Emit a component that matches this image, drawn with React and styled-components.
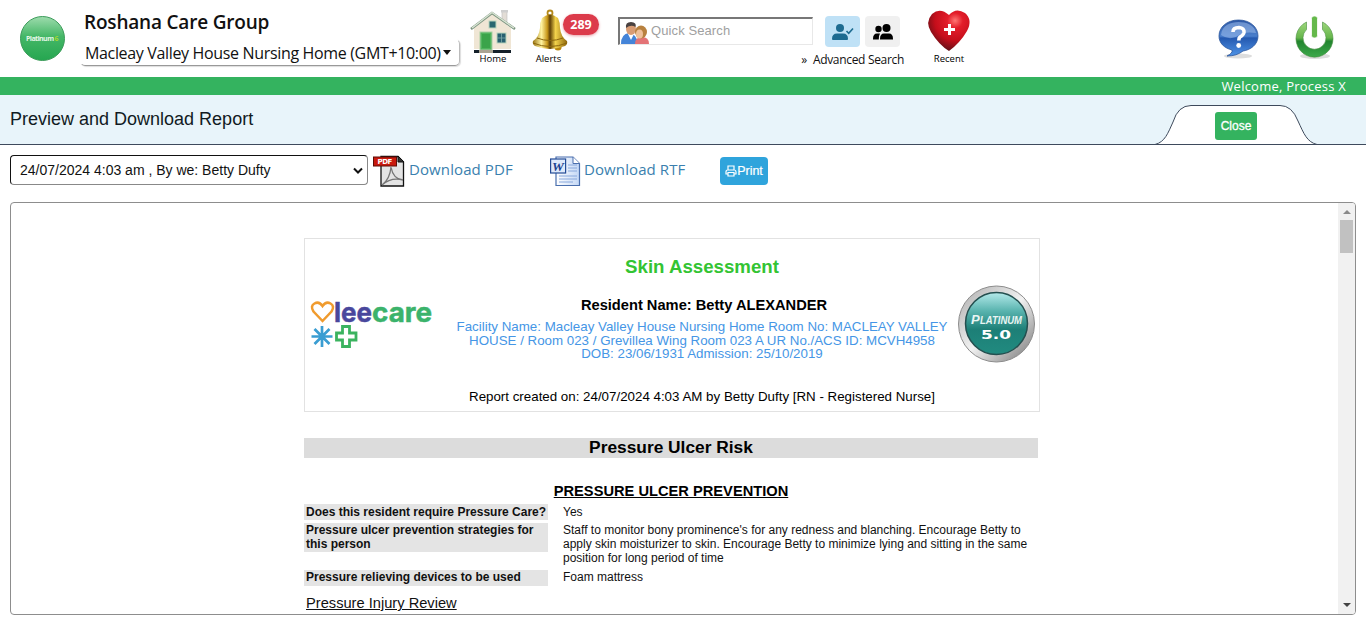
import React from "react";
import styled, { createGlobalStyle } from "styled-components";

const Global = createGlobalStyle`
  * { box-sizing: border-box; }
  body { margin: 0; background: #fff; overflow: hidden; font-family: "Liberation Sans", Arial, sans-serif; color: #111; }
`;

const ui = `"Open Sans", "Noto Sans", sans-serif`;

const Page = styled.div`
  height: 633px;
  display: flex;
  flex-direction: column;
`;

const Header = styled.header`
  height: 77px;
  display: flex;
  align-items: flex-start;
  padding-left: 20px;
  font-family: ${ui};
`;

const Slot = styled.div`
  flex: none;
  width: ${(p) => p.$w}px;
  margin-left: ${(p) => p.$gap || 0}px;
  padding-top: ${(p) => p.$top || 0}px;
  position: relative;
`;

const Pic = styled.svg`
  display: block;
  flex: none;
  overflow: visible;
`;

const OrgName = styled.div`
  padding-left: 4px;
  font-size: 19px;
  line-height: 26px;
  font-weight: 600;
  letter-spacing: -0.2px;
  white-space: nowrap;
`;

const SitePicker = styled.div`
  display: flex;
  align-items: center;
  height: 27px;
  margin-top: 4px;
  padding: 0 8px 0 4px;
  border: 1px solid transparent;
  border-right-color: #bbb;
  border-bottom-color: #999;
  border-radius: 5px;
  box-shadow: 1px 1px 1px #ddd;
  font-size: 16px;
  letter-spacing: -0.34px;
  white-space: nowrap;
`;

const Caret = styled.span`
  margin-left: 2px;
  border: 4px solid transparent;
  border-top: 5px solid #111;
  border-bottom: 0;
`;

const IconLabel = styled.div`
  margin-left: ${(p) => p.$shift || 0}px;
  padding-top: ${(p) => p.$drop || 0}px;
  font-size: 9.5px;
  line-height: 12px;
  text-align: center;
  color: #000;
`;

const Badge = styled.span`
  position: absolute;
  left: 31px;
  top: 14px;
  width: 36px;
  height: 21px;
  border-radius: 11px;
  background: #dc3b4b;
  color: #fff;
  font-size: 12.5px;
  font-weight: 700;
  line-height: 21px;
  text-align: center;
  box-shadow: 0 1px 3px #e9a0a8;
`;

const SearchRow = styled.div`
  display: flex;
  align-items: flex-start;
`;

const SearchBox = styled.div`
  display: flex;
  align-items: center;
  gap: 1px;
  width: 195px;
  height: 28px;
  margin: 1px 12px 0 0;
  padding: 0 0 0 1px;
  border: 1px solid #e8e8e8;
  border-top: 2px solid #777;
  border-left: 2px solid #777;
  font: 13px "Liberation Sans", Arial, sans-serif;
  letter-spacing: 0.1px;
  color: #a0a0a0;
`;

const SearchHint = styled.span`
  margin-top: -2px;
`;

const ModeButton = styled.div`
  display: flex;
  align-items: center;
  justify-content: center;
  width: 35px;
  height: 31px;
  margin-right: 5px;
  border-radius: 4px;
  background: ${(p) => (p.$active ? "#bfe1f6" : "#f0f0f0")};
`;

const Advanced = styled.div`
  width: 286px;
  margin-top: 5px;
  display: flex;
  justify-content: flex-end;
  gap: 6px;
  font-size: 12px;
  line-height: 16px;
  white-space: nowrap;
  letter-spacing: -0.32px;
`;

const Welcome = styled.div`
  height: 18px;
  background: #34b35f;
  color: #fff;
  padding-right: 20px;
  text-align: right;
  font: 13px/18px ${ui};
  letter-spacing: 0.23px;
`;

const TitleBar = styled.div`
  height: 50px;
  display: flex;
  justify-content: space-between;
  padding: 0 49px 0 10px;
  background: #e8f4fa;
  border-bottom: 1px solid #3e4a5c;
`;

const Title = styled.h1`
  margin: 0;
  font-size: 18px;
  line-height: 48px;
  font-weight: 400;
  color: #111a22;
`;

const CloseTab = styled.div`
  position: relative;
  width: 162px;
  height: 40px;
  margin-top: 10px;
`;

const CloseButton = styled.button`
  position: absolute;
  left: 60px;
  top: 7px;
  width: 42px;
  height: 28px;
  padding: 0;
  border: 0;
  border-radius: 3px;
  background: #34b35f;
  color: #fff;
  font: 12px "Liberation Sans", Arial, sans-serif;
  -webkit-text-stroke: 0.3px #fff;
`;

const Tools = styled.div`
  height: 57px;
  display: flex;
  align-items: flex-start;
  padding: 10px 10px 0;
`;

const VersionSelect = styled.div`
  width: 358px;
  height: 30px;
  display: flex;
  align-items: center;
  justify-content: space-between;
  padding: 0 4px 0 9px;
  border: 1px solid #111;
  border-right-color: #888;
  border-bottom-color: #888;
  border-radius: 4px;
  font-size: 14px;
`;

const DownloadLink = styled.a`
  display: flex;
  align-items: center;
  gap: ${(p) => p.$gap}px;
  width: ${(p) => p.$w}px;
  height: 32px;
  margin-left: ${(p) => p.$ml}px;
  color: #3a7fae;
  font: 15px/20px ${ui};
  letter-spacing: 0.1px;
  white-space: nowrap;
`;

const LinkText = styled.span`
  margin-top: -4px;
`;

const PrintButton = styled.button`
  display: flex;
  align-items: center;
  justify-content: center;
  width: 48px;
  height: 28px;
  margin: 2px 0 0 auto;
  padding: 0;
  border: 0;
  border-radius: 4px;
  background: #2fa4dc;
  color: #fff;
  font: 12.5px "Liberation Sans", Arial, sans-serif;
  -webkit-text-stroke: 0.2px #fff;
`;

const ToolGroup = styled.div`
  display: flex;
  width: 758px;
`;

const Viewer = styled.main`
  display: flex;
  height: 413px;
  margin: 0 10px;
  border: 1px solid #8d8d8d;
  border-radius: 4px;
  overflow: hidden;
`;

const Scroller = styled.div`
  width: 17px;
  display: flex;
  flex-direction: column;
  justify-content: space-between;
  align-items: center;
  padding: 7px 0 7px;
  background: #f1f1f1;
`;

const Thumb = styled.div`
  width: 13px;
  height: 33px;
  margin: 6px 0 auto;
  background: #c1c1c1;
`;

const Arrow = styled.div`
  border: 4px solid transparent;
  ${(p) => (p.$up ? "border-bottom: 4px solid #8a8a8a; border-top: 0;" : "border-top: 4px solid #444; border-bottom: 0;")}
`;

const Report = styled.article`
  flex: 1;
  padding: 35px 0 0 293px;
`;

const ReportHead = styled.section`
  display: flex;
  width: 736px;
  height: 174px;
  border: 1px solid #e2e2e2;
`;

const HeadText = styled.div`
  width: 496px;
  margin-left: 20px;
  text-align: center;
  white-space: nowrap;
`;

const ReportTitle = styled.h2`
  margin: 17px 0 0;
  font-size: 18.67px;
  line-height: 22px;
  color: #33c433;
`;

const Resident = styled.div`
  margin: 17px 0 0 4px;
  font-size: 14.67px;
  font-weight: 700;
  line-height: 20px;
  color: #000;
`;

const Facility = styled.div`
  margin-top: 5px;
  font-size: 13.33px;
  line-height: 13.5px;
  color: #4596e6;
`;

const Created = styled.div`
  margin-top: 27px;
  font-size: 13.33px;
  line-height: 18px;
  color: #000;
`;

const SectionBar = styled.h3`
  width: 734px;
  height: 20px;
  margin: 26px 0 0;
  background: #dcdcdc;
  text-align: center;
  font-size: 17.33px;
  line-height: 19px;
  color: #000;
`;

const SubHead = styled.h4`
  width: 734px;
  margin: 24px 0 4px;
  text-align: center;
  text-decoration: underline;
  font-size: 14.67px;
  line-height: 18px;
  color: #000;
`;

const Row = styled.div`
  display: grid;
  grid-template-columns: 244px 490px;
  align-items: start;
  margin-bottom: 3px;
  font-size: 12px;
  line-height: 14px;
`;

const Key = styled.div`
  padding: ${(p) => p.$lead}px 2px ${(p) => (p.$tall ? 1 : 2 - p.$lead)}px;
  background: #e4e4e4;
  font-weight: 700;
  white-space: nowrap;
`;

const Value = styled.div`
  padding: ${(p) => p.$lead}px 0 ${(p) => 2 - p.$lead}px 15px;
  white-space: nowrap;
`;

const Review = styled.div`
  padding: 5px 2px;
  font-size: 14.67px;
  line-height: 18px;
  text-decoration: underline;
`;

const BrandBall = () => (
  <Pic width="45" height="45" viewBox="0 0 45 45">
    <defs>
      <linearGradient id="ball" x1="0" y1="0" x2="0" y2="1">
        <stop offset="0" stopColor="#9fdcae" /><stop offset=".45" stopColor="#45b767" /><stop offset="1" stopColor="#25a650" />
      </linearGradient>
    </defs>
    <circle cx="22.5" cy="22.5" r="22" fill="url(#ball)" stroke="#3c9c5a" />
    <text x="6" y="25" fontFamily="Open Sans, sans-serif" fontSize="7" fontWeight="700" fill="#e6f7e6" textLength="28">Platinum</text>
    <text x="34.5" y="25" fontFamily="Open Sans, sans-serif" fontSize="7" fontWeight="700" fill="#a5d92f">6</text>
  </Pic>
);

const House = () => (
  <Pic width="46" height="44" viewBox="0 0 46 44">
    <rect x="32" y="2" width="5" height="14" fill="#e3ddd6" stroke="#bbb" strokeWidth=".6" />
    <rect x="31" y="1" width="7" height="2.5" fill="#cfcfcf" />
    <path d="M4 19 22 5 41 19V40H4Z" fill="#f0e6d5" />
    <path d="M4 41h37v3H4z" fill="#15202a" />
    <path d="M1 20 22 4 45 20" fill="none" stroke="#7d9480" strokeWidth="2.600" />
    <path d="M2 19 22 3.5 44 19" fill="none" stroke="#d9e5d3" strokeWidth="1.4" />
    <rect x="19" y="12" width="7" height="7" fill="#2a6770" stroke="#b9d5bd" />
    <rect x="10" y="23" width="12" height="18" fill="#4fb45c" stroke="#a9cfa4" />
    <path d="M12 25h8v14h-8z" fill="#3ba44a" />
    <rect x="27" y="24" width="9" height="10" fill="#286070" stroke="#b9d5bd" />
    <path d="M31.5 24v10M27 29h9" stroke="#7fa9a8" strokeWidth=".8" />
    <path d="M9 41h14v3H9z" fill="#aaa493" />
  </Pic>
);

const Bell = () => (
  <Pic width="36" height="42" viewBox="0 0 36 42">
    <defs>
      <linearGradient id="gold">
        <stop offset="0" stopColor="#9b7512" /><stop offset=".25" stopColor="#fff3a0" /><stop offset=".42" stopColor="#c9981a" />
        <stop offset=".5" stopColor="#5e3f06" /><stop offset=".66" stopColor="#f3d34c" /><stop offset="1" stopColor="#8d650b" />
      </linearGradient>
    </defs>
    <circle cx="18" cy="3" r="2.5" fill="none" stroke="#b58a1b" strokeWidth="1.8" />
    <circle cx="26" cy="37" r="3.600" fill="#b8860f" />
    <path d="M10 8Q18 1 26 8Q28 12 28 18Q29 27 35 31Q36 34 33 36Q18 42 3 36Q0 34 1 31Q7 27 8 18Q8 12 10 8Z" fill="url(#gold)" />
    <path d="M5 28Q18 33 31 28M1 33Q18 40 35 33" fill="none" stroke="#8b660d" strokeWidth="1" />
  </Pic>
);

const Couple = () => (
  <Pic width="29" height="24" viewBox="0 0 29 24">
    <path d="M0 24Q0 14 8 13Q16 14 17 24Z" fill="#4484d8" />
    <path d="M7 14l3 6 3-6Z" fill="#fff" />
    <ellipse cx="10" cy="9" rx="5" ry="6" fill="#d99c74" />
    <path d="M5 8Q4 2 10 2Q16 2.500 14.500 7Q10 4 5 8Z" fill="#4a4241" />
    <path d="M14 24Q14 17 21 17Q28 17 28 24Z" fill="#e37376" />
    <ellipse cx="20" cy="12" rx="6" ry="6.500" fill="#b8813f" />
    <ellipse cx="18.500" cy="14" rx="3.500" ry="4.500" fill="#efc09a" />
  </Pic>
);

const UserCheck = () => (
  <Pic width="23" height="18" viewBox="0 0 23 18" fill="#1d6b91">
    <circle cx="9" cy="5" r="4" />
    <path d="M1 16Q1 10.500 6 10.500H12Q17 10.500 17 16Q17 17 16 17H2Q1 17 1 16Z" />
    <path d="M15.500 8 17.700 10.300 22 5.500" fill="none" stroke="#1d6b91" strokeWidth="1.6" />
  </Pic>
);

const Users = () => (
  <Pic width="22" height="18" viewBox="0 0 22 18" fill="#000">
    <circle cx="6.500" cy="6" r="3.200" /><circle cx="14.500" cy="5" r="4" />
    <path d="M1 16Q1 10.500 5 10.500H8Q6.500 13 6.800 16.500H1Z" />
    <path d="M8 16Q8 10.500 12 10.500H17Q21 10.500 21 16V16.500H8Z" />
  </Pic>
);

const Heart = () => (
  <Pic width="42" height="42" viewBox="0 0 42 42">
    <defs>
      <radialGradient id="heart" cx=".65" cy=".25" r=".75">
        <stop offset="0" stopColor="#ff7774" /><stop offset=".25" stopColor="#e31d2a" /><stop offset=".65" stopColor="#c50e1b" /><stop offset="1" stopColor="#651017" />
      </radialGradient>
    </defs>
    <path d="M21 5Q12-3 4 4Q-3 12 3 22Q11 35 21 41Q32 33 39 21Q45 10 37 3Q28-3 21 5Z" fill="url(#heart)" />
    <path d="M20 14h3v4h4v3h-4v4h-3v-4h-4v-3h4Z" fill="#fff" />
  </Pic>
);

const Help = () => (
  <Pic width="41" height="40" viewBox="0 0 41 40">
    <defs>
      <linearGradient id="help" x1="0" y1="0" x2="0" y2="1">
        <stop offset="0" stopColor="#2d58a5" /><stop offset=".45" stopColor="#4a7fcc" /><stop offset=".5" stopColor="#2459b0" /><stop offset="1" stopColor="#4e93e6" />
      </linearGradient>
    </defs>
    <ellipse cx="20" cy="37" rx="14" ry="2.500" fill="#ddd" />
    <path d="M20.500 1C32 1 40 8 40 17C40 26 32 31 25 32Q19 37 9 37Q15 34 14 31C6 29 1 24 1 17C1 8 9 1 20.500 1Z" fill="url(#help)" stroke="#2b559c" strokeWidth=".8" />
    <path d="M3 16C4 6 13 3 20.500 3S37 6 38 14Q25 12 18 18Q10 21 3 16Z" fill="#a5c4ef" opacity=".5" />
    <path d="M15 13Q15 8.500 21 8.500Q26.500 9 26 13.500Q25.500 16 22 18Q20.800 19 20.800 21.500" fill="none" stroke="#fff" strokeWidth="3.600" />
    <circle cx="20.700" cy="26.500" r="2.400" fill="#fff" />
  </Pic>
);

const Power = () => (
  <Pic width="40" height="43" viewBox="0 0 40 43">
    <defs>
      <linearGradient id="power" x1="0" y1="0" x2="0" y2="1">
        <stop offset="0" stopColor="#9ed77c" /><stop offset=".45" stopColor="#66b54b" /><stop offset=".55" stopColor="#22852f" /><stop offset="1" stopColor="#3da94b" />
      </linearGradient>
    </defs>
    <ellipse cx="20" cy="40" rx="15" ry="3" fill="#ddd" />
    <path d="M11.500 6A18.500 18.500 0 1 0 27.500 6L27.500 13.500A11.500 11.500 0 1 1 11.500 13.500Z" fill="url(#power)" stroke="#458b3c" strokeWidth=".6" />
    <rect x="16.500" y="0" width="6" height="22" rx="2.500" fill="#65b94b" stroke="#fff" strokeWidth=".8" />
  </Pic>
);

const TabShape = () => (
  <Pic width="162" height="40" viewBox="0 0 162 40">
    <path d="M0 39.500C10 37 13 28 18 17Q23 .5 36 .5H125Q137 .5 143 16C149 29 152 37 162 39.500V41H0Z" fill="#fff" />
    <path d="M0 39.500C10 37 13 28 18 17Q23 .5 36 .5H125Q137 .5 143 16C149 29 152 37 162 39.500" fill="none" stroke="#3e4a5c" />
    <path d="M0 39.500H162" stroke="#3e4a5c" />
  </Pic>
);

const PdfIcon = () => (
  <Pic width="32" height="32" viewBox="0 0 32 32">
    <path d="M8 1.500H25L30.500 7V31H8Z" fill="#e4e4e4" stroke="#111" strokeWidth="1.300" />
    <path d="M25 1v6h6Z" fill="#333" stroke="#111" />
    <path d="M9 30Q17 24 18 12Q20 24 30 25Q18 22 9 30" fill="none" stroke="#777" strokeWidth="1.300" />
    <rect x=".5" y="2" width="23" height="9" fill="#c9190d" stroke="#5e0c06" />
    <text x="4.500" y="9.300" fontFamily="DejaVu Sans, sans-serif" fontSize="7" fontWeight="700" fill="#fff" textLength="15">PDF</text>
  </Pic>
);

const WordIcon = () => (
  <Pic width="31" height="31" viewBox="0 0 31 31">
    <defs>
      <linearGradient id="doc"><stop offset="0" stopColor="#fff" /><stop offset="1" stopColor="#c3d7f5" /></linearGradient>
    </defs>
    <path d="M6 1H23L29.500 7.500V29.500H6Z" fill="url(#doc)" stroke="#4a6fae" strokeWidth="1.200" />
    <path d="M23 1v6.500h6.500" fill="#fff" stroke="#4a6fae" />
    <path d="M18 9h9M18 12h9M18 15h9M9 20h18M9 23h18M9 26h14" stroke="#88a8dc" />
    <rect x=".6" y="3" width="15" height="14" fill="#dfeafb" stroke="#234b97" strokeWidth="1.200" />
    <text x="2" y="14.500" fontFamily="Liberation Serif, serif" fontSize="13" fontWeight="700" fontStyle="italic" fill="#1c438f" textLength="12" lengthAdjust="spacingAndGlyphs">W</text>
  </Pic>
);

const Printer = () => (
  <Pic width="12" height="12" viewBox="0 0 12 12" fill="none" stroke="#fff" strokeWidth="1.200">
    <path d="M3 5V1h6v4M3 9H1V7Q1 5 2.500 5H9.500Q11 5 11 7V9H9" /><path d="M3 7.500h6V11H3Z" />
  </Pic>
);

const Leecare = () => (
  <Pic width="123" height="48" viewBox="0 0 123 48">
    <path d="M11.500 20 2.500 10.500Q-1 5 3.500 2.500Q8 0 11.500 5Q15 0 19.500 2.500Q24 5 20.500 10.500Z" fill="none" stroke="#f09b2e" strokeWidth="2.500" />
    <g fontFamily="Inter, sans-serif" fontSize="27" fontWeight="700" strokeWidth=".5">
      <text x="23" y="21" fill="#49479c" stroke="#49479c" textLength="38" lengthAdjust="spacingAndGlyphs">lee</text>
      <text x="61" y="21" fill="#3bb36b" stroke="#3bb36b" textLength="60" lengthAdjust="spacingAndGlyphs">care</text>
    </g>
    <path d="M11 25v21M.5 35.500h21M3.500 28l15 15M18.500 28 3.500 43" stroke="#3a9dd2" strokeWidth="2.700" />
    <path d="M31.500 25.500h7v6.500h6.500v7h-6.500v6.500h-7V39H25.500v-7h6Z" fill="none" stroke="#3bb35f" strokeWidth="2.800" />
  </Pic>
);

const Platinum = () => (
  <Pic width="78" height="78" viewBox="0 0 78 78">
    <defs>
      <linearGradient id="rim" x1="0" y1="0" x2="1" y2="1">
        <stop offset="0" stopColor="#aaa" /><stop offset=".5" stopColor="#f2f2f2" /><stop offset="1" stopColor="#737373" />
      </linearGradient>
      <linearGradient id="teal" x1="0" y1="0" x2="0" y2="1">
        <stop offset="0" stopColor="#b4eaea" /><stop offset=".3" stopColor="#58b3ae" /><stop offset=".6" stopColor="#1d7f77" /><stop offset="1" stopColor="#218b80" />
      </linearGradient>
    </defs>
    <circle cx="38.500" cy="39" r="38" fill="url(#rim)" stroke="#8c8c8c" />
    <circle cx="38.500" cy="38.500" r="31" fill="url(#teal)" stroke="#244f4f" strokeWidth="1.500" />
    <g fontFamily="Liberation Sans, sans-serif" fontWeight="700" fontStyle="italic" fill="#e9f5f3">
      <text x="13" y="39" fontSize="13">P</text>
      <text x="22" y="39" fontSize="10" textLength="42" lengthAdjust="spacingAndGlyphs">LATINUM</text>
    </g>
    <text x="23" y="54" fontFamily="DejaVu Sans, sans-serif" fontSize="12" fontWeight="700" fill="#fff" textLength="30" lengthAdjust="spacingAndGlyphs">5.0</text>
  </Pic>
);

const rows = [
  { lead: 1, key: ["Does this resident require Pressure Care?"], value: ["Yes"] },
  {
    lead: 0,
    key: ["Pressure ulcer prevention strategies for", "this person"],
    value: [
      "Staff to monitor bony prominence's for any redness and blanching. Encourage Betty to",
      "apply skin moisturizer to skin. Encourage Betty to minimize lying and sitting in the same",
      "position for long period of time",
    ],
  },
  { lead: 0, key: ["Pressure relieving devices to be used"], value: ["Foam mattress"] },
];

const lines = (items) => items.map((t) => <div key={t}>{t}</div>);

export default function App() {
  return (
    <Page>
      <Global />
      <Header>
        <Slot $w={45} $top={16}><BrandBall /></Slot>
        <Slot $w={380} $gap={15} $top={9}>
          <OrgName>Roshana Care Group</OrgName>
          <SitePicker>Macleay Valley House Nursing Home (GMT+10:00)<Caret /></SitePicker>
        </Slot>
        <Slot $w={46} $gap={10} $top={9}><House /><IconLabel>Home</IconLabel></Slot>
        <Slot $w={36} $gap={16} $top={10}>
          <Bell /><IconLabel $shift={-3} $drop={1}>Alerts</IconLabel>
          <Badge>289</Badge>
        </Slot>
        <Slot $w={287} $gap={50} $top={16}>
          <SearchRow>
            <SearchBox><Couple /><SearchHint>Quick Search</SearchHint></SearchBox>
            <ModeButton $active><UserCheck /></ModeButton>
            <ModeButton><Users /></ModeButton>
          </SearchRow>
          <Advanced><span>»</span><span>Advanced Search</span></Advanced>
        </Slot>
        <Slot $w={42} $gap={23} $top={10}><Heart /><IconLabel $drop={1}>Recent</IconLabel></Slot>
        <Slot $w={41} $gap={248} $top={19}><Help /></Slot>
        <Slot $w={40} $gap={36} $top={16}><Power /></Slot>
      </Header>
      <Welcome>Welcome, Process X</Welcome>
      <TitleBar>
        <Title>Preview and Download Report</Title>
        <CloseTab><TabShape /><CloseButton>Close</CloseButton></CloseTab>
      </TitleBar>
      <Tools>
        <ToolGroup>
          <VersionSelect>
            24/07/2024 4:03 am , By we: Betty Dufty
            <Pic width="10" height="7" viewBox="0 0 10 7"><path d="M1 1.500 5 5.500 9 1.500" fill="none" stroke="#111" strokeWidth="2" /></Pic>
          </VersionSelect>
          <DownloadLink $w={141} $ml={5} $gap={4}><PdfIcon /><LinkText>Download PDF</LinkText></DownloadLink>
          <DownloadLink $w={137} $ml={36} $gap={3}><WordIcon /><LinkText>Download RTF</LinkText></DownloadLink>
          <PrintButton><Printer />Print</PrintButton>
        </ToolGroup>
      </Tools>
      <Viewer>
        <Report>
          <ReportHead>
            <Slot $w={123} $gap={6} $top={62}><Leecare /></Slot>
            <HeadText>
              <ReportTitle>Skin Assessment</ReportTitle>
              <Resident>Resident Name: Betty ALEXANDER</Resident>
              <Facility>
                Facility Name: Macleay Valley House Nursing Home Room No: MACLEAY VALLEY<br />
                HOUSE / Room 023 / Grevillea Wing Room 023 A UR No./ACS ID: MCVH4958<br />
                DOB: 23/06/1931 Admission: 25/10/2019
              </Facility>
              <Created>Report created on: 24/07/2024 4:03 AM by Betty Dufty [RN - Registered Nurse]</Created>
            </HeadText>
            <Slot $w={78} $gap={8} $top={46}><Platinum /></Slot>
          </ReportHead>
          <SectionBar>Pressure Ulcer Risk</SectionBar>
          <SubHead>PRESSURE ULCER PREVENTION</SubHead>
          {rows.map((r) => (
            <Row key={r.key[0]}>
              <Key $lead={r.lead} $tall={r.key.length > 1}>{lines(r.key)}</Key>
              <Value $lead={r.lead}>{lines(r.value)}</Value>
            </Row>
          ))}
          <Review>Pressure Injury Review</Review>
        </Report>
        <Scroller><Arrow $up /><Thumb /><Arrow /></Scroller>
      </Viewer>
    </Page>
  );
}
